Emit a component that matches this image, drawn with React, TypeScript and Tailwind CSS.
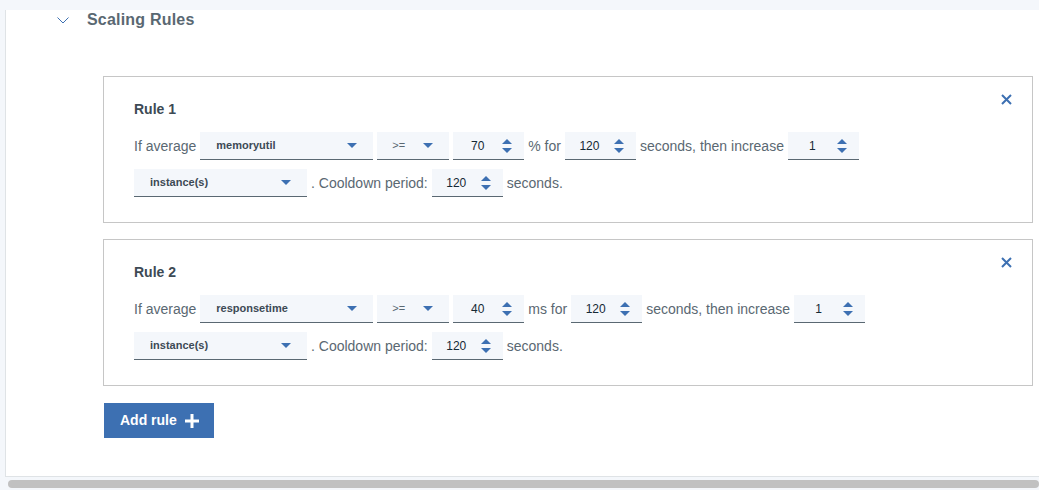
import { Fragment } from 'react'

type Rule = {
  id: number
  metric: string
  op: string
  threshold: number
  unit: string
  duration: number
  step: number
  cooldown: number
}

const rules: Rule[] = [
  { id: 1, metric: 'memoryutil', op: '>=', threshold: 70, unit: '% for', duration: 120, step: 1, cooldown: 120 },
  { id: 2, metric: 'responsetime', op: '>=', threshold: 40, unit: 'ms for', duration: 120, step: 1, cooldown: 120 },
]

function Caret() {
  return (
    <svg width="10" height="5" viewBox="0 0 10 5" className="shrink-0">
      <path d="M0 0h10L5 5z" fill="#3d70b2" />
    </svg>
  )
}

function Spinner() {
  return (
    <svg width="10" height="14" viewBox="0 0 10 14" className="shrink-0">
      <path d="M5 0l5 5H0z" fill="#3d70b2" />
      <path d="M0 9h10l-5 5z" fill="#3d70b2" />
    </svg>
  )
}

function Select({ value, wide }: { value: string; wide?: boolean }) {
  return (
    <div
      className={
        wide
          ? 'flex h-[28px] w-[173px] shrink-0 items-center justify-between border-b border-[#5a6872] bg-[#f4f7fb] pl-[16px] pr-[16px]'
          : 'flex h-[28px] w-[72px] shrink-0 items-center justify-between border-b border-[#5a6872] bg-[#f4f7fb] pl-[15px] pr-[16px]'
      }
    >
      <span className={wide ? 'text-[11px] font-semibold text-[#3d4a55]' : 'text-[11px] text-[#5a6872]'}>
        {value}
      </span>
      <Caret />
    </div>
  )
}

function NumberBox({ value }: { value: number }) {
  return (
    <div className="flex h-[28px] w-[71px] shrink-0 items-center border-b border-[#5a6872] bg-[#f4f7fb] pr-[12px]">
      <span className="flex-1 text-center text-[12px] text-[#152935]">{value}</span>
      <Spinner />
    </div>
  )
}

function Label({ children }: { children: string }) {
  return <span className="shrink-0 whitespace-nowrap text-[14px] text-[#5a6872]">{children}</span>
}

function RuleCard({ rule }: { rule: Rule }) {
  return (
    <div className="relative h-[147px] border border-[#c6c6c6] bg-white pl-[30px] pt-[22px]">
      <button className="absolute right-[19px] top-[16px] p-[1px]">
        <svg width="11" height="11" viewBox="0 0 11 11">
          <path d="M1 1l9 9M10 1l-9 9" stroke="#3d70b2" strokeWidth="2" />
        </svg>
      </button>
      <h3 className="text-[14px] font-bold text-[#3d4a55]">Rule {rule.id}</h3>
      <div className="mt-[12px] flex items-center gap-[4px]">
        <Label>If average</Label>
        <Select value={rule.metric} wide />
        <Select value={rule.op} />
        <NumberBox value={rule.threshold} />
        <Label>{rule.unit}</Label>
        <NumberBox value={rule.duration} />
        <Label>seconds, then increase</Label>
        <NumberBox value={rule.step} />
      </div>
      <div className="mt-[9px] flex items-center gap-[4px]">
        <Select value="instance(s)" wide />
        <Label>. Cooldown period:</Label>
        <NumberBox value={rule.cooldown} />
        <Label>seconds.</Label>
      </div>
    </div>
  )
}

export default function App() {
  return (
    <div className="h-[490px] overflow-hidden bg-[#f4f7fb] pl-[5px] pt-[10px] font-['Liberation_Sans',sans-serif]">
      <div className="h-[467px] border-b border-l border-[#dfe3e6] bg-white">
        <div className="flex h-[20px] items-center pl-[51px]">
          <svg width="12" height="7" viewBox="0 0 12 7" className="mr-[18px]">
            <path d="M0.5 0.5L6 6l5.5-5.5" stroke="#3d70b2" strokeWidth="1" fill="none" />
          </svg>
          <span className="text-[16px] font-semibold leading-[20px] tracking-[0.2px] text-[#5a6872]">
            Scaling Rules
          </span>
        </div>
        <div className="ml-[97px] mr-[1px] mt-[46px] w-[930px] space-y-[16px]">
          {rules.map((r) => (
            <Fragment key={r.id}>
              <RuleCard rule={r} />
            </Fragment>
          ))}
        </div>
        <button className="ml-[98px] mt-[17px] flex h-[35px] w-[110px] items-center gap-[8px] bg-[#3d70b2] pl-[16px] text-[14px] font-semibold text-white">
          Add rule
          <svg width="14" height="14" viewBox="0 0 14 14">
            <path d="M7 0v14M0 7h14" stroke="#fff" strokeWidth="3" />
          </svg>
        </button>
      </div>
      <div className="ml-[3px] mt-[3px] h-[8px] rounded-full bg-[#c1c1c1]" />
    </div>
  )
}
